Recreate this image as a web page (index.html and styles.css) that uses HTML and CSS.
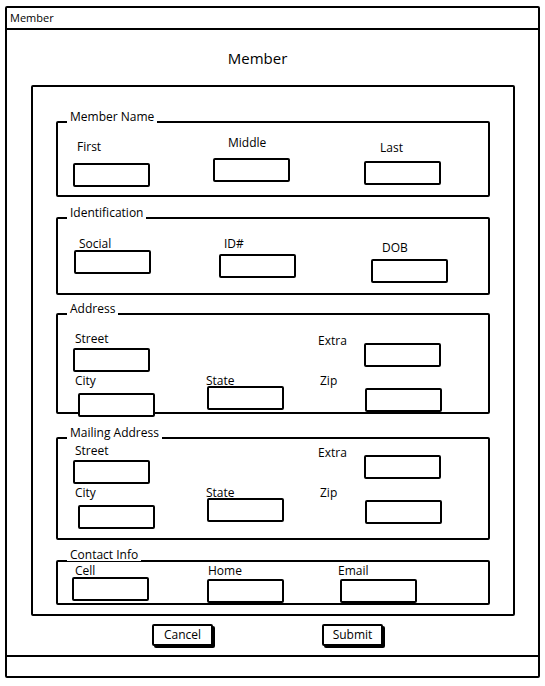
FILE: index.html
```html
<!DOCTYPE html>
<html lang="en">
<head>
  <meta charset="UTF-8" />
  <meta name="viewport" content="width=device-width, initial-scale=1.0" />
  <title>Member</title>
  <link rel="stylesheet" href="styles.css">
</head>
<body>
  <!-- Fenêtre principale -->
  <div class="window">
    <div class="titlebar">Member</div>

    <div class="content">
      <h1 class="heading">Member</h1>

      <div class="panel">
        <!-- Member Name -->
        <div class="group g-name">
          <span class="legend">Member Name</span>
          <div class="row">
            <div class="field f-first"><label>First</label><input type="text" class="box"></div>
            <div class="field f-middle"><label>Middle</label><input type="text" class="box"></div>
            <div class="field f-last"><label>Last</label><input type="text" class="box"></div>
          </div>
        </div>

        <!-- Identification -->
        <div class="group g-ident">
          <span class="legend">Identification</span>
          <div class="row">
            <div class="field f-social"><label>Social</label><input type="text" class="box"></div>
            <div class="field f-id"><label>ID#</label><input type="text" class="box"></div>
            <div class="field f-dob"><label>DOB</label><input type="text" class="box"></div>
          </div>
        </div>

        <!-- Address -->
        <div class="group g-address">
          <span class="legend">Address</span>
          <div class="row">
            <div class="field f-street"><label>Street</label><input type="text" class="box"></div>
            <div class="field side f-extra"><label>Extra</label><input type="text" class="box"></div>
          </div>
          <div class="row">
            <div class="field f-city"><label>City</label><input type="text" class="box"></div>
            <div class="field f-state"><label>State</label><input type="text" class="box"></div>
            <div class="field side f-zip"><label>Zip</label><input type="text" class="box"></div>
          </div>
        </div>

        <!-- Mailing Address -->
        <div class="group g-mailing">
          <span class="legend">Mailing Address</span>
          <div class="row">
            <div class="field f-street"><label>Street</label><input type="text" class="box"></div>
            <div class="field side f-extra"><label>Extra</label><input type="text" class="box"></div>
          </div>
          <div class="row">
            <div class="field f-city"><label>City</label><input type="text" class="box"></div>
            <div class="field f-state"><label>State</label><input type="text" class="box"></div>
            <div class="field side f-zip"><label>Zip</label><input type="text" class="box"></div>
          </div>
        </div>

        <!-- Contact Info -->
        <div class="group g-contact">
          <span class="legend">Contact Info</span>
          <div class="row">
            <div class="field f-cell"><label>Cell</label><input type="text" class="box"></div>
            <div class="field f-home"><label>Home</label><input type="text" class="box"></div>
            <div class="field f-email"><label>Email</label><input type="text" class="box"></div>
          </div>
        </div>
      </div>

      <div class="actions">
        <button class="btn btn-cancel">Cancel</button>
        <button class="btn btn-submit">Submit</button>
      </div>
    </div>

    <div class="statusbar"></div>
  </div>
</body>
</html>
```

FILE: styles.css
```css
/* ===============================
   BASE
   =============================== */
* {
  margin: 0;
  padding: 0;
  box-sizing: border-box;
}
body {
  font-family: "Open Sans", "DejaVu Sans", sans-serif;
  background: #fff;
  color: #000;
}

/* ===============================
   FENÊTRE
   =============================== */
.window {
  margin: 6px 0 0 5px;
  width: 535px;
  height: 672px;
  border: 2px solid #000;
  border-radius: 2px;
  display: flex;
  flex-direction: column;
}
.titlebar {
  height: 22px;
  border-bottom: 2px solid #000;
  font-size: 11px;
  line-height: 19px;
  padding-left: 3px;
}
.content {
  flex: 1;
}
.statusbar {
  height: 21px;
  border-top: 2px solid #000;
}
.heading {
  font-size: 15px;
  font-weight: normal;
  line-height: 20px;
  text-align: center;
  margin: 18px 0 17px 0;
  padding-right: 30px;
}

/* ===============================
   PANEL + GROUPES
   =============================== */
.panel {
  margin-left: 24px;
  width: 484px;
  height: 531px;
  border: 2px solid #000;
  border-radius: 2px;
  padding: 34px 23px 0 23px;
}
.group {
  position: relative;
  border: 2px solid #000;
  border-radius: 2px;
}
.legend {
  position: absolute;
  top: -12px;
  left: 9px;
  background: #fff;
  padding: 0 3px;
  font-size: 12px;
  line-height: 12px;
}
.g-contact .legend {
  top: -13px;
}
.g-name { height: 76px; }
.g-ident { height: 78px; margin-top: 20px; }
.g-address { height: 101px; margin-top: 18px; padding-top: 12px; }
.g-mailing { height: 103px; margin-top: 23px; }
.g-contact { height: 45px; margin-top: 20px; }

.row {
  display: flex;
  align-items: flex-start;
}

/* ===============================
   CHAMPS
   =============================== */
.field {
  display: flex;
  flex-direction: column;
  align-items: flex-start;
}
.field label {
  display: block;
  font-size: 12px;
  line-height: 16px;
  margin-bottom: -2px;
  white-space: nowrap;
}
.field.side {
  flex-direction: row;
}
.box {
  display: block;
  width: 77px;
  height: 24px;
  border: 2px solid #000;
  border-radius: 2px;
  background: #fff;
  outline: none;
}

/* Member Name */
.f-first { margin: 16px 0 0 15px; }
.f-first label { margin-left: 4px; }
.f-first .box { margin-top: 10px; }
.f-middle { margin: 12px 0 0 63px; }
.f-middle label { margin-left: 15px; }
.f-middle .box { margin-top: 9px; }
.f-last { margin: 17px 0 0 74px; }
.f-last label { margin-left: 16px; }
.f-last .box { margin-top: 7px; }

/* Identification */
.f-social { margin: 17px 0 0 16px; }
.f-social label { margin-left: 5px; }
.f-id { margin: 17px 0 0 68px; }
.f-id label { margin-left: 5px; }
.f-id .box { margin-top: 4px; }
.f-dob { margin: 21px 0 0 75px; }
.f-dob label { margin-left: 11px; }
.f-dob .box { margin-top: 5px; }

/* Address / Mailing Address */
.f-street { margin: 4px 0 0 15px; }
.f-street label { margin-left: 2px; }
.f-street .box { margin-top: 3px; }
.f-extra { margin: 6px 0 0 168px; }
.f-extra label { width: 46px; }
.f-extra .box { margin-top: 10px; }
.f-city { margin: 1px 0 0 15px; }
.f-city label { margin-left: 2px; }
.f-city .box { margin: 6px 0 0 5px; }
.f-state { margin: 1px 0 0 51px; }
.f-state .box { margin: -1px 0 0 1px; }
.f-zip { margin: 1px 0 0 36px; }
.f-zip label { width: 45px; }
.f-zip .box { margin-top: 15px; }

/* Contact Info */
.f-cell { margin: 2px 0 0 14px; }
.f-cell label { margin-left: 3px; line-height: 14px; margin-bottom: 0; }
.f-cell .box { margin-top: -1px; }
.f-home { margin: 1px 0 0 58px; }
.f-home label { margin-left: 1px; }
.f-home .box { margin-top: 2px; }
.f-email { margin: 1px 0 0 54px; }
.f-email .box { margin: 2px 0 0 2px; }

/* ===============================
   BOUTONS
   =============================== */
.actions {
  display: flex;
  margin-top: 8px;
}
.btn {
  cursor: pointer;
  width: 61px;
  height: 22px;
  border: 2px solid #000;
  border-radius: 2px;
  background: #fff;
  box-shadow: 2px 2px 0 #000;
  font-family: inherit;
  font-size: 12px;
  line-height: 16px;
  color: #000;
}
.btn-cancel { margin-left: 145px; }
.btn-submit { margin-left: 109px; }
```
